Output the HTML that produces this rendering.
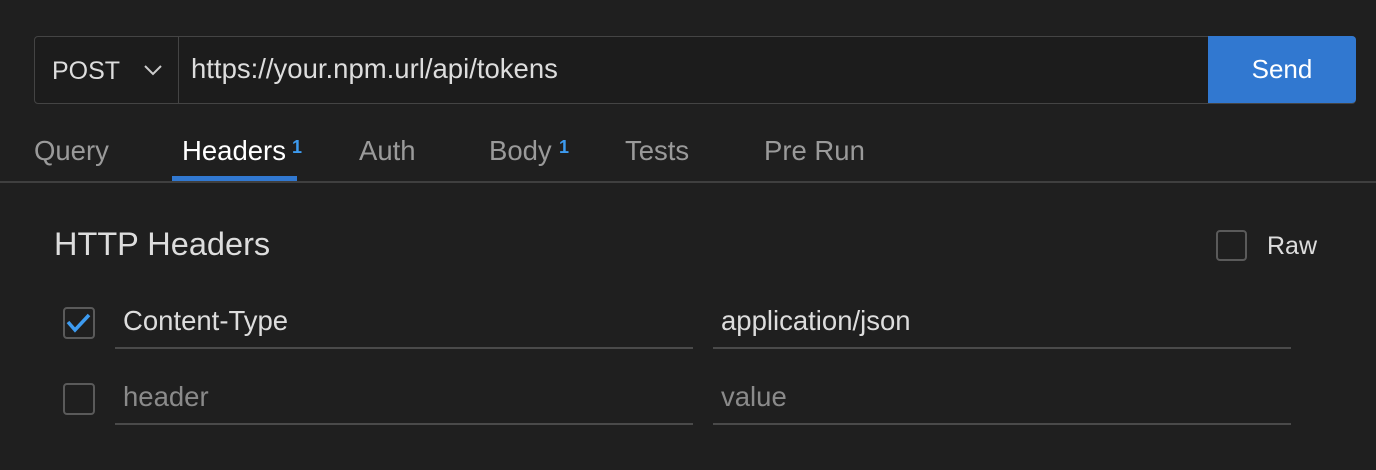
<!DOCTYPE html>
<html><head><style>
body{margin:0;width:1376px;height:470px;background:#1f1f1f;font-family:"Liberation Sans",sans-serif;position:relative;overflow:hidden;color:#ddd}
.a{position:absolute;white-space:nowrap}
.cb{position:absolute;border:2px solid #5a5a5a;border-radius:4px;box-sizing:border-box}
.t{position:absolute;font-size:27.5px;line-height:30px;color:#9a9a9a;white-space:nowrap}
.ln{position:absolute;height:2px;background:#4a4a4a}
.sp{position:absolute;color:#3d9bf0;font-size:18px;font-weight:bold;line-height:18px}
.r{font-size:27.5px;line-height:30px}
</style></head><body>
<div class="a" style="left:34px;top:36px;width:1320px;height:66px;border:1px solid #444;border-radius:4px;background:#1c1c1c"></div>
<div class="a" style="left:178px;top:37px;width:1px;height:66px;background:#444"></div>
<div class="a" style="left:52px;top:56px;font-size:25px;line-height:30px;color:#ddd">POST</div>
<svg class="a" style="left:143px;top:63px" width="20" height="14"><path d="M2 3 L10 11 L18 3" stroke="#ccc" stroke-width="2" fill="none"/></svg>
<div class="a r" style="left:191px;top:54px;color:#ddd">https://your.npm.url/api/tokens</div>
<div class="a" style="left:1208px;top:36px;width:148px;height:67px;background:#3178d0;border-radius:0 4px 4px 0;color:#fff;font-size:26px;line-height:67px;text-align:center">Send</div>
<div class="t" style="left:34px;top:136px">Query</div>
<div class="t" style="left:182px;top:136px;color:#fff">Headers</div><div class="sp" style="left:292px;top:138px">1</div>
<div class="t" style="left:359px;top:136px">Auth</div>
<div class="t" style="left:489px;top:136px">Body</div><div class="sp" style="left:559px;top:138px">1</div>
<div class="t" style="left:625px;top:136px">Tests</div>
<div class="t" style="left:764px;top:136px">Pre Run</div>
<div class="a" style="left:172px;top:176px;width:125px;height:5px;background:#3178d0"></div>
<div class="a" style="left:0;top:181px;width:1376px;height:2px;background:#3f3f3f"></div>
<div class="a" style="left:54px;top:227px;font-size:32.5px;line-height:34px;color:#ddd">HTTP Headers</div>
<div class="cb" style="left:1216px;top:230px;width:31px;height:31px"></div>
<div class="a" style="left:1267px;top:231px;font-size:25px;line-height:30px;color:#ddd">Raw</div>
<div class="cb" style="left:63px;top:307px;width:32px;height:32px"></div>
<svg class="a" style="left:63px;top:307px" width="32" height="32"><path d="M5 15 L12 23 L26 8" stroke="#3d9bf0" stroke-width="3.5" fill="none"/></svg>
<div class="a r" style="left:123px;top:306px;color:#ddd">Content-Type</div>
<div class="a r" style="left:721px;top:306px;color:#ddd">application/json</div>
<div class="ln" style="left:115px;top:347px;width:578px"></div>
<div class="ln" style="left:713px;top:347px;width:578px"></div>
<div class="cb" style="left:63px;top:383px;width:32px;height:32px"></div>
<div class="a r" style="left:123px;top:382px;color:#8a8a8a">header</div>
<div class="a r" style="left:721px;top:382px;color:#8a8a8a">value</div>
<div class="ln" style="left:115px;top:423px;width:578px"></div>
<div class="ln" style="left:713px;top:423px;width:578px"></div>
</body></html>
